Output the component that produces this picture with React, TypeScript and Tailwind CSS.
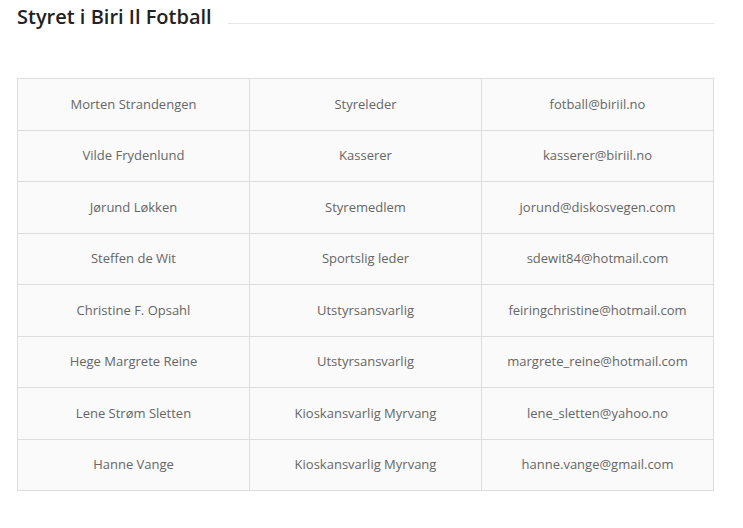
const members = [
  { name: 'Morten Strandengen', role: 'Styreleder', email: 'fotball@biriil.no' },
  { name: 'Vilde Frydenlund', role: 'Kasserer', email: 'kasserer@biriil.no' },
  { name: 'Jørund Løkken', role: 'Styremedlem', email: 'jorund@diskosvegen.com' },
  { name: 'Steffen de Wit', role: 'Sportslig leder', email: 'sdewit84@hotmail.com' },
  { name: 'Christine F. Opsahl', role: 'Utstyrsansvarlig', email: 'feiringchristine@hotmail.com' },
  { name: 'Hege Margrete Reine', role: 'Utstyrsansvarlig', email: 'margrete_reine@hotmail.com' },
  { name: 'Lene Strøm Sletten', role: 'Kioskansvarlig Myrvang', email: 'lene_sletten@yahoo.no' },
  { name: 'Hanne Vange', role: 'Kioskansvarlig Myrvang', email: 'hanne.vange@gmail.com' },
]

export default function App() {
  return (
    <div className="min-h-screen bg-white font-['Open_Sans',sans-serif] px-[17px] pt-[3px]">
      <div className="flex items-center gap-[16px] w-[697px]">
        <h2 className="text-[20px] font-semibold text-[#222] leading-[28px] whitespace-nowrap">
          Styret i Biri Il Fotball
        </h2>
        <div className="flex-grow h-px bg-[#e6e6e6] mt-[12px]" />
      </div>

      <table className="mt-[47px] w-[697px] border-collapse table-fixed bg-[#fafafa]">
        <tbody>
          {members.map((m) => (
            <tr key={m.name} className="h-[51.5px]">
              <td className="border border-[#dddddd] text-center text-[13px] text-[#666]">{m.name}</td>
              <td className="border border-[#dddddd] text-center text-[13px] text-[#666]">{m.role}</td>
              <td className="border border-[#dddddd] text-center text-[13px] text-[#666]">{m.email}</td>
            </tr>
          ))}
        </tbody>
      </table>
    </div>
  )
}
